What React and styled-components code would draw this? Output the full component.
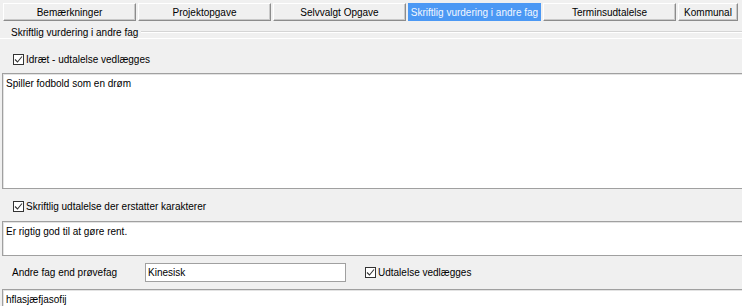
import styled, { createGlobalStyle } from "styled-components";

const GlobalStyle = createGlobalStyle`
  html, body {
    margin: 0;
    padding: 0;
    background: #f0f0f0;
    overflow: hidden;
  }
  body {
    font-family: "Liberation Sans", Arial, sans-serif;
    font-size: 10px;
    color: #000;
  }
`;

const tabs = [
    "Bemærkninger",
    "Projektopgave",
    "Selvvalgt Opgave",
    "Skriftlig vurdering i andre fag",
    "Terminsudtalelse",
    "Kommunal",
];

const CheckBox = ({ checked }) => (
    <Box>
        {checked && (
            <svg width="9" height="9" viewBox="0 0 9 9">
                <path d="M1 4.5 L3.5 7 L8 1.5" fill="none" stroke="#333" strokeWidth="1.1" />
            </svg>
        )}
    </Box>
);

const Check = ({ label }) => (
    <CheckLabel>
        <CheckBox checked />
        <span>{label}</span>
    </CheckLabel>
);

const App = () => {
    const active = 3;
    return (
        <Page>
            <GlobalStyle />
            <TabBar>
                {tabs.map((t, i) => (
                    <Tab key={t} $selected={i === active} $last={i === tabs.length - 1}>
                        {t}
                    </Tab>
                ))}
            </TabBar>
            <GroupHeader>
                <GroupTitle>Skriftlig vurdering i andre fag</GroupTitle>
                <GroupRule />
            </GroupHeader>
            <Panel>
                <CheckRow $top={15} $bottom={8}>
                    <Check label="Idræt - udtalelse vedlægges" />
                </CheckRow>
                <TextBox $height={116}>Spiller fodbold som en drøm</TextBox>
                <CheckRow $top={12} $bottom={9}>
                    <Check label="Skriftlig udtalelse der erstatter karakterer" />
                </CheckRow>
                <TextBox $height={35}>Er rigtig god til at gøre rent.</TextBox>
                <FieldRow>
                    <FieldLabel>Andre fag end prøvefag</FieldLabel>
                    <Input>Kinesisk</Input>
                    <Check label="Udtalelse vedlægges" />
                </FieldRow>
                <TextBox $height={30}>hflasjæfjasofij</TextBox>
            </Panel>
        </Page>
    );
};

const Page = styled.div`
    width: 742px;
    padding-top: 3px;
`;

const TabBar = styled.div`
    display: flex;
    gap: 2px;
    padding-left: 3px;
`;

const Tab = styled.div`
    flex: 0 0 ${(p) => (p.$last ? "60px" : "133px")};
    height: 18px;
    box-sizing: border-box;
    display: flex;
    align-items: center;
    justify-content: center;
    white-space: nowrap;
    overflow: hidden;
    background: ${(p) => (p.$selected ? "#4b98f4" : "#f0f0f0")};
    color: ${(p) => (p.$selected ? "#f2f7ff" : "#000")};
    border: 1px solid;
    border-color: ${(p) =>
        p.$selected ? "#4b98f4" : "#ffffff #8c8c8c #8c8c8c #ffffff"};
    box-shadow: ${(p) => (p.$selected ? "none" : "inset -1px -1px #c9c9c9")};
`;

const GroupHeader = styled.div`
    display: flex;
    align-items: center;
    height: 12px;
    margin-top: 5px;
    padding-left: 11px;
    border-bottom: 1px solid #ffffff;
`;

const GroupTitle = styled.span`
    padding-right: 3px;
    white-space: nowrap;
`;

const GroupRule = styled.div`
    flex: 1;
    border-top: 1px solid #d5d5d5;
    border-bottom: 1px solid #ffffff;
`;

const Panel = styled.div`
    display: flex;
    flex-direction: column;
`;

const CheckRow = styled.div`
    display: flex;
    align-items: center;
    padding: ${(p) => `${p.$top}px 0 ${p.$bottom}px 13px`};
`;

const CheckLabel = styled.label`
    display: flex;
    align-items: center;
    gap: 2px;
    white-space: nowrap;
`;

const Box = styled.span`
    width: 11px;
    height: 11px;
    box-sizing: border-box;
    border: 1px solid #333;
    background: #fff;
    display: flex;
    align-items: center;
    justify-content: center;
`;

const TextBox = styled.div`
    height: ${(p) => p.$height}px;
    box-sizing: border-box;
    margin-left: 2px;
    padding: 4px 3px;
    background: #fff;
    border: 1px solid #a0a0a0;
    border-right: none;
    box-shadow: inset 1px 1px #e3e3e3;
`;

const FieldRow = styled.div`
    display: flex;
    align-items: center;
    height: 33px;
    padding-left: 12px;
`;

const FieldLabel = styled.span`
    width: 133px;
    white-space: nowrap;
`;

const Input = styled.div`
    width: 201px;
    height: 19px;
    box-sizing: border-box;
    margin-right: 19px;
    padding-left: 2px;
    display: flex;
    align-items: center;
    background: #fff;
    border: 1px solid #a0a0a0;
`;

export default App;
